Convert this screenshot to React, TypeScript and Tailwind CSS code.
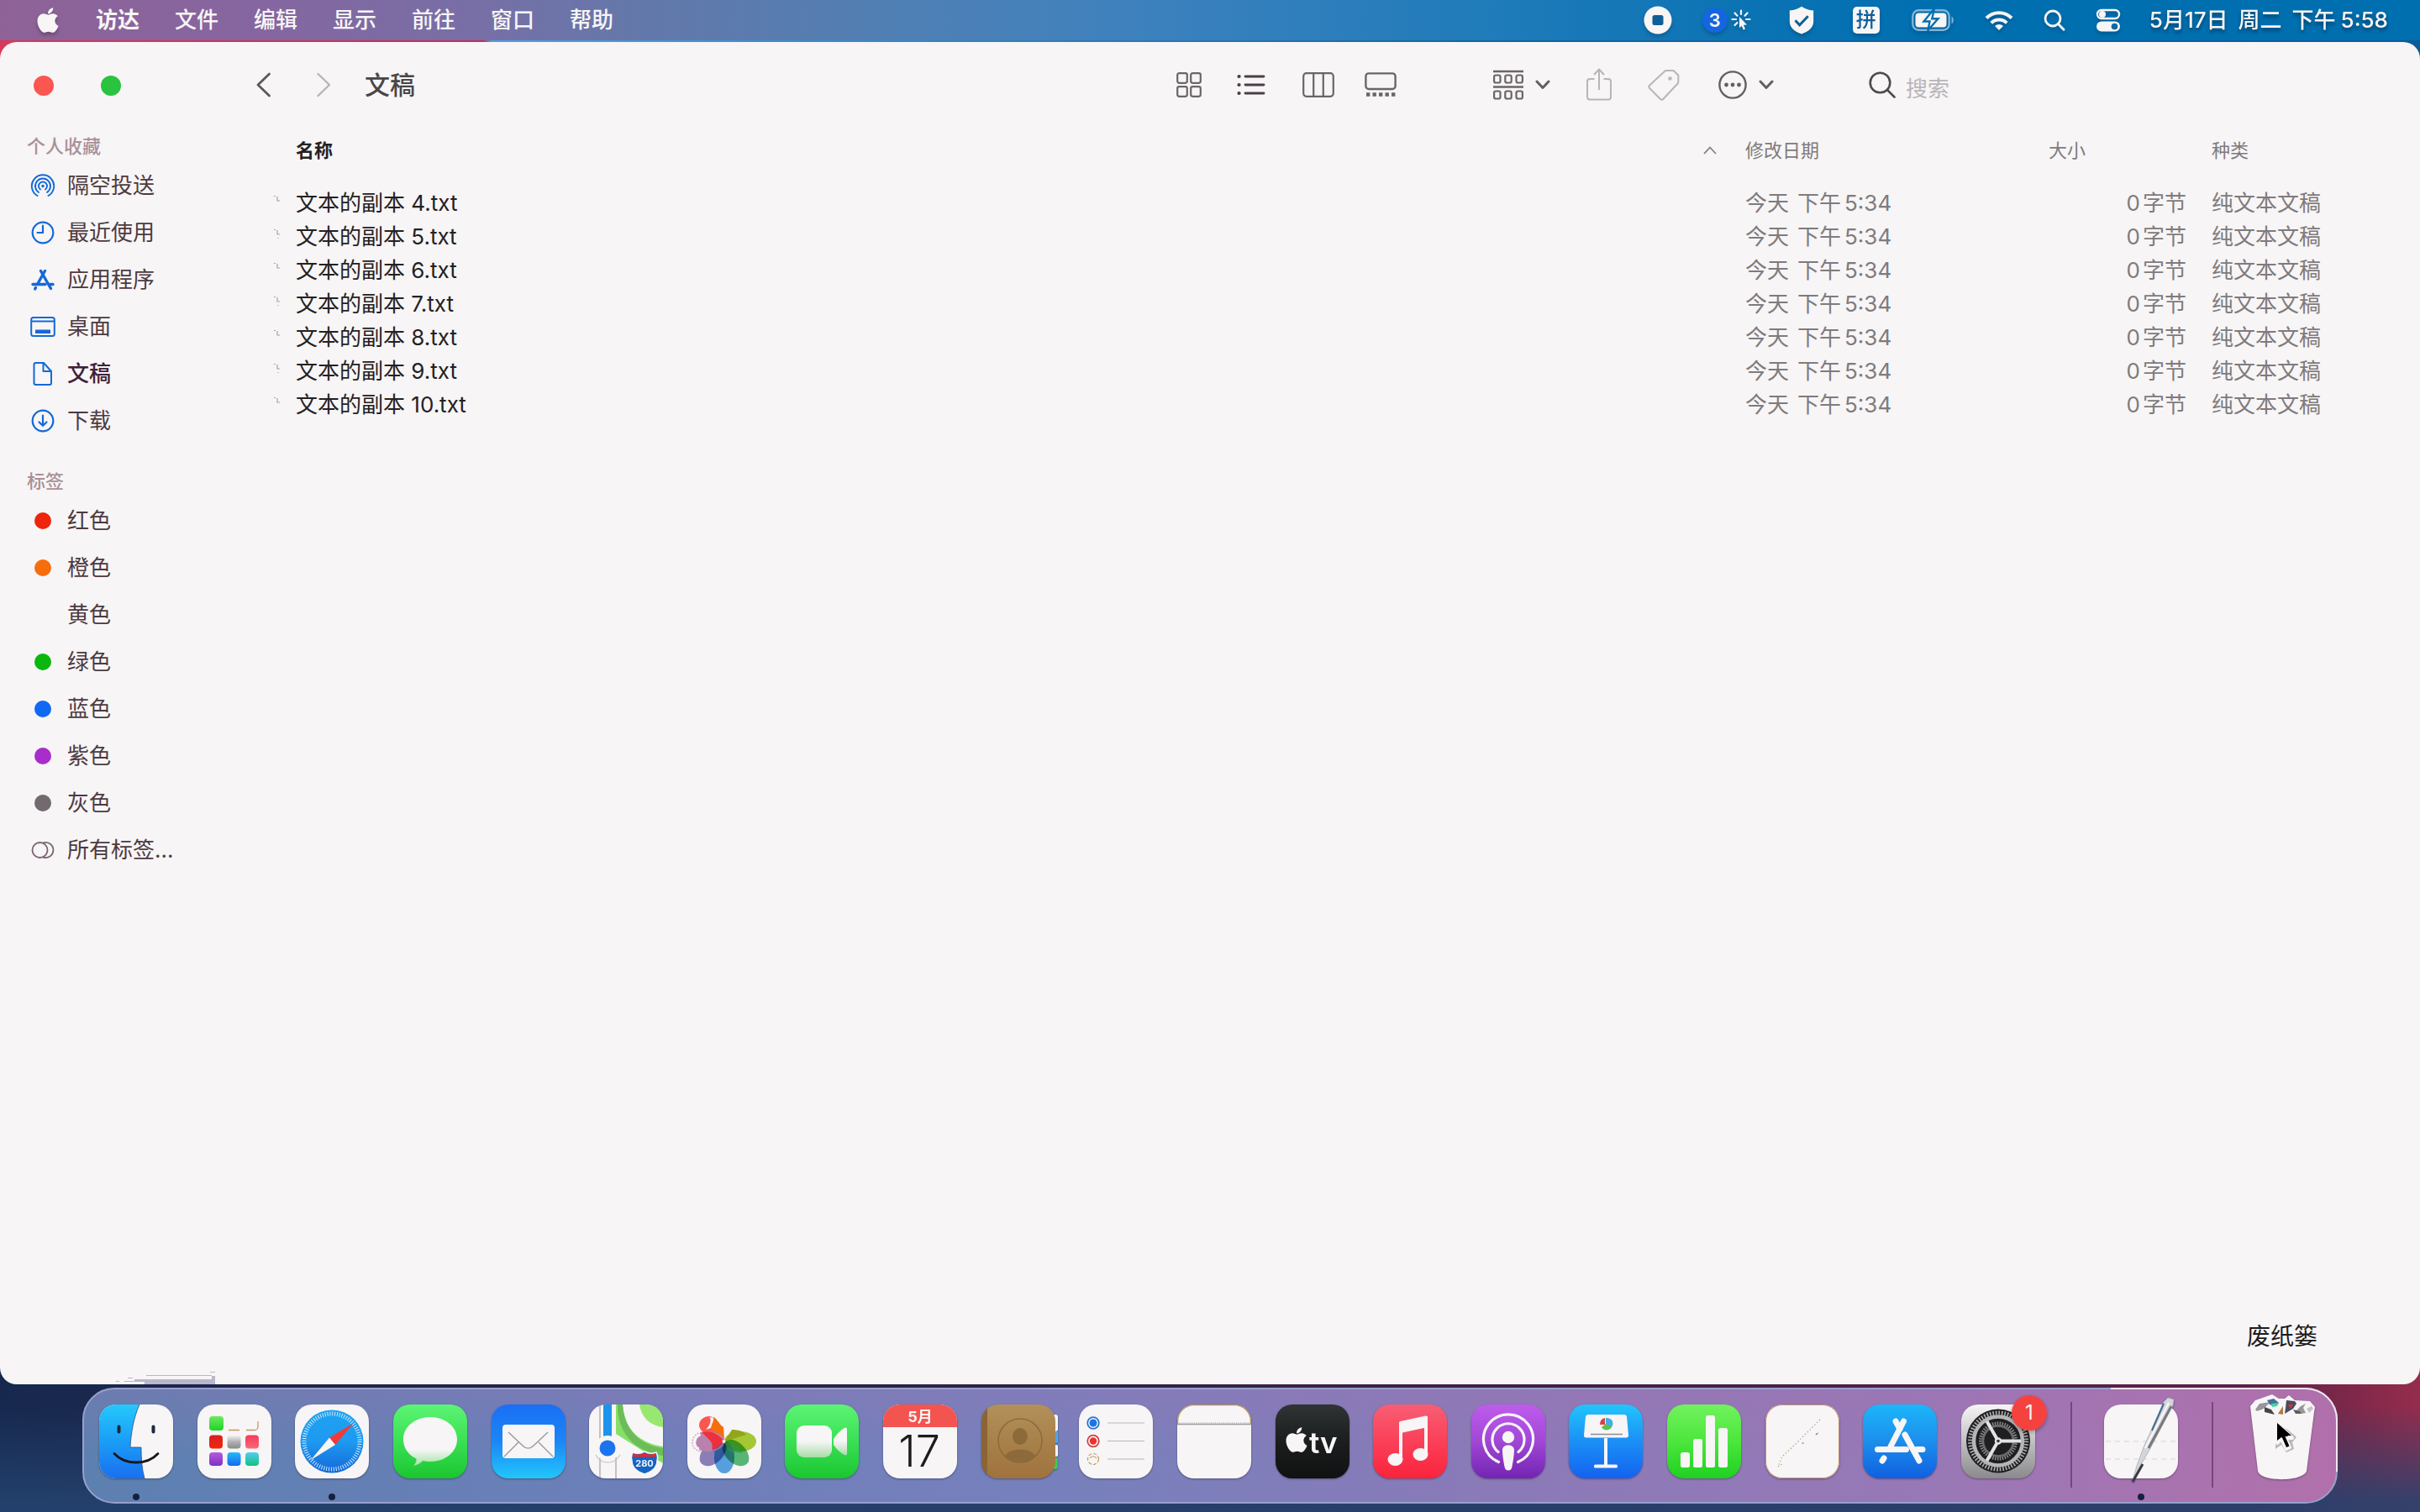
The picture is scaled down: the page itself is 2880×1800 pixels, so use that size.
import React from "react";
import { FaApple } from "react-icons/fa";

/* ---------- menu bar ---------- */

const menus = ["文件", "编辑", "显示", "前往", "窗口", "帮助"];

function MenuBar() {
  return (
    <header className="flex h-12 items-center bg-[linear-gradient(90deg,#8e6297_0px,#8566a0_320px,#786fa6_560px,#6478aa_760px,#4f80b5_1080px,#3b81be_1380px,#1f7bb9_1780px,#0a73b4_2100px,#006fb0_2300px)] pr-[38px] pl-[42px] text-[26px] leading-8 font-medium text-[#f7f5f6] [text-shadow:0_3px_4px_rgba(0,0,0,0.25)]">
      <button aria-label="Apple" className="flex w-[30px] justify-center drop-shadow-[0_3px_2px_rgba(0,0,0,0.25)]">
        <FaApple size={34} />
      </button>
      <nav className="ml-[42px] flex flex-1 gap-[42px]">
        <button className="font-bold">访达</button>
        {menus.map((m) => (
          <button key={m}>{m}</button>
        ))}
      </nav>
      <div className="flex items-center drop-shadow-[0_3px_2px_rgba(0,0,0,0.2)]">
        <button aria-label="停止录制" className="mr-9">
          <svg width="34" height="34" viewBox="0 0 34 34">
            <circle cx="17" cy="17" r="16.500" fill="#f7f5f6" />
            <rect x="10.500" y="11" width="13" height="12" rx="2.500" fill="#0f5f96" />
          </svg>
        </button>
        <button className="mr-[45px] flex items-center gap-1">
          <span className="flex size-[30px] items-center justify-center rounded-full bg-[#1466e0] text-[22px] leading-none font-semibold">3</span>
          <svg width="24" height="26" viewBox="0 0 24 26" fill="none" stroke="#f7f5f6" strokeWidth="2.200" strokeLinecap="round">
            <path d="M12 1.500v4.500M4.500 4.500l3 3.200M19.500 4.500l-3 3.200M1.500 12h4.500M18 12h4.500M4.500 19l3-3" />
            <path d="M10 9l9 9.500-4 .2 2 4.800-2.300 1-2-4.800L10 22.300z" fill="#f7f5f6" stroke="none" />
          </svg>
        </button>
        <button aria-label="安全" className="mr-[46px]">
          <svg width="30" height="34" viewBox="0 0 30 34">
            <path d="M15 .8c4 2.700 8.500 4.200 14.200 4.700v13c0 7.500-6 12-14.200 15C6.800 30.500.8 26 .8 18.500v-13C6.500 5 11 3.500 15 .8z" fill="#f7f5f6" />
            <path d="M7.500 17.200l5.200 5.600 10-10.500" fill="none" stroke="#0f5f96" strokeWidth="3" />
          </svg>
        </button>
        <button className="mr-[38px] flex size-8 items-center justify-center rounded-[5px] bg-[#f7f5f6] text-[24px] leading-8 font-medium text-[#0d5f97] [text-shadow:none]">拼</button>
        <button aria-label="电池" className="mr-9">
          <svg width="51" height="26" viewBox="0 0 51 26">
            <rect x="1.300" y="1.300" width="43.400" height="23.400" rx="7" fill="none" stroke="#7db4dc" strokeWidth="2.400" />
            <path d="M47.500 8.500c3 1.200 3 7.800 0 9z" fill="#7db4dc" />
            <rect x="4.500" y="4.500" width="37" height="17" rx="4" fill="#f7f5f6" />
            <path d="M25.500 1L14.500 14.500h7L19.500 25l12-13.800h-7.200L26.500 1z" fill="#f7f5f6" stroke="#006fb0" strokeWidth="2.400" />
          </svg>
        </button>
        <button aria-label="无线局域网" className="mr-9">
          <svg width="34" height="26" viewBox="0 0 34 26" fill="none" stroke="#f7f5f6" strokeWidth="4">
            <path d="M2 10.500a21 21 0 0130 0" />
            <path d="M7.800 16.400a13 13 0 0118.400 0" />
            <path d="M17 25l-5-5a7 7 0 0110 0z" fill="#f7f5f6" stroke="none" />
          </svg>
        </button>
        <button aria-label="聚焦" className="mr-9">
          <svg width="26" height="26" viewBox="0 0 26 26" fill="none" stroke="#f7f5f6" strokeWidth="2.800" strokeLinecap="round">
            <circle cx="11" cy="11" r="9" />
            <path d="M17.500 17.500l6.500 6.700" />
          </svg>
        </button>
        <button aria-label="控制中心" className="mr-[34px]">
          <svg width="30" height="28" viewBox="0 0 30 28">
            <rect x="2" y="2" width="26" height="10" rx="5" fill="none" stroke="#f7f5f6" strokeWidth="2.400" />
            <circle cx="8" cy="7" r="4" fill="#f7f5f6" />
            <rect x="1" y="15.500" width="28" height="12" rx="6" fill="#f7f5f6" />
            <circle cx="22.500" cy="21.500" r="3.800" fill="#0b6aa6" />
          </svg>
        </button>
        <time className="flex gap-3">
          <span>5月17日</span>
          <span>周二</span>
          <span className="flex gap-[6px]">
            <span>下午</span>
            <span>5:58</span>
          </span>
        </time>
      </div>
    </header>
  );
}

/* ---------- sidebar ---------- */

const blue = "#1469d8";

const favourites: { label: string; icon: React.ReactNode; active?: boolean }[] = [
  {
    label: "隔空投送",
    icon: (
      <g fill="none" stroke={blue} strokeWidth="1.900" strokeLinecap="round">
        <circle cx="15" cy="15.500" r="1.800" fill={blue} stroke="none" />
        <path d="M12 19.500a5 5 0 116 0" />
        <path d="M10 23a9 9 0 1110 0" />
        <path d="M8.500 27a13.200 13.200 0 1113 0" />
      </g>
    ),
  },
  {
    label: "最近使用",
    icon: (
      <g fill="none" stroke={blue} strokeWidth="2.200" strokeLinecap="round">
        <circle cx="15" cy="15" r="12.300" />
        <path d="M15 6.500V15H8.500" />
      </g>
    ),
  },
  {
    label: "应用程序",
    icon: (
      <g fill="none" stroke={blue} strokeWidth="3.400" strokeLinecap="round">
        <path d="M12.500 4.500l12 21" />
        <path d="M17.500 4.500L9 19.500" />
        <path d="M3 20.500h15M23.500 20.500H27M6.500 24.500l-.8 1.400" />
      </g>
    ),
  },
  {
    label: "桌面",
    icon: (
      <g fill="none" stroke={blue} strokeWidth="2">
        <rect x="1.200" y="4" width="27.600" height="22" rx="2.500" />
        <path d="M1.200 8.500h27.600" />
        <rect x="6" y="18.500" width="18" height="4.500" fill={blue} stroke="none" />
      </g>
    ),
  },
  {
    label: "文稿",
    active: true,
    icon: (
      <g fill="none" stroke={blue} strokeWidth="2" strokeLinejoin="round">
        <path d="M6.500 2h9.500l9 10v14a2 2 0 01-2 2H6.500a2 2 0 01-2-2V4a2 2 0 012-2z" />
        <path d="M15.500 2.500V12H25" />
      </g>
    ),
  },
  {
    label: "下载",
    icon: (
      <g fill="none" stroke={blue} strokeWidth="2.200" strokeLinecap="round">
        <circle cx="15" cy="15" r="12.300" />
        <path d="M15 8.500v12M10.500 16.500l4.500 4.300 4.500-4.300" />
      </g>
    ),
  },
];

const tags = [
  { label: "红色", dot: "bg-[#f0230c]" },
  { label: "橙色", dot: "bg-[#f66d0c]" },
  { label: "黄色", dot: "bg-transparent" },
  { label: "绿色", dot: "bg-[#0bb70e]" },
  { label: "蓝色", dot: "bg-[#0f69f3]" },
  { label: "紫色", dot: "bg-[#a92dcb]" },
  { label: "灰色", dot: "bg-[#726a6f]" },
];

function SidebarItem({ label, active, children }: { label: string; active?: boolean; children: React.ReactNode }) {
  return (
    <li>
      <a href="#" className={active ? "flex h-14 items-center gap-[14px] font-medium text-[#3f1f3c]" : "flex h-14 items-center gap-[14px] text-[#4d3a40]"}>
        <span className="flex w-[30px] justify-center">{children}</span>
        {label}
      </a>
    </li>
  );
}

function Sidebar() {
  return (
    <aside className="w-[288px] shrink-0">
      <div className="flex h-[104px] items-center gap-14 pl-10">
        <button aria-label="关闭" className="size-6 rounded-full bg-[#fb5650]" />
        <button aria-label="全屏幕" className="size-6 rounded-full bg-[#2ac33f]" />
      </div>
      <nav className="pt-1 pl-8 text-[26px] leading-8">
        <h2 className="text-[22px] leading-8 font-medium text-[#a99098]">个人收藏</h2>
        <ul className="pt-[3px] pl-1">
          {favourites.map((f) => (
            <SidebarItem key={f.label} label={f.label} active={f.active}>
              <svg width="30" height="30" viewBox="0 0 30 30">{f.icon}</svg>
            </SidebarItem>
          ))}
        </ul>
        <h2 className="pt-7 text-[22px] leading-8 font-medium text-[#a99098]">标签</h2>
        <ul className="pt-[3px] pl-1">
          {tags.map((t) => (
            <SidebarItem key={t.label} label={t.label}>
              <span className={`size-5 rounded-full ${t.dot}`} />
            </SidebarItem>
          ))}
          <SidebarItem label="所有标签...">
            <svg width="28" height="20" viewBox="0 0 28 20" fill="none" stroke="#7b6672" strokeWidth="1.800">
              <circle cx="10.500" cy="10" r="9" />
              <path d="M14 1.700A9 9 0 1114 18.300" />
            </svg>
          </SidebarItem>
        </ul>
      </nav>
    </aside>
  );
}

/* ---------- toolbar ---------- */

function Chevron() {
  return (
    <svg width="18" height="12" viewBox="0 0 18 12" fill="none" stroke="#655e62" strokeWidth="3" strokeLinecap="round" strokeLinejoin="round">
      <path d="M2 2l7 7.500L16 2" />
    </svg>
  );
}

function Toolbar() {
  return (
    <div className="flex h-[102px] items-center pl-4">
      <button aria-label="返回">
        <svg width="20" height="30" viewBox="0 0 20 30" fill="none" stroke="#5c585a" strokeWidth="2.800" strokeLinecap="round" strokeLinejoin="round">
          <path d="M16.500 2L3 15l13.500 13" />
        </svg>
      </button>
      <button aria-label="前进" className="ml-[51px]">
        <svg width="20" height="30" viewBox="0 0 20 30" fill="none" stroke="#b7b4b6" strokeWidth="2.400" strokeLinecap="round" strokeLinejoin="round">
          <path d="M3.500 2L17 15 3.500 28" />
        </svg>
      </button>
      <h1 className="ml-[39px] flex-1 text-[30px] leading-10 font-medium text-[#4a4648]">文稿</h1>

      <div className="flex items-center">
        <button aria-label="图标视图">
          <svg width="30" height="30" viewBox="0 0 30 30" fill="none" stroke="#6b6569" strokeWidth="2.200">
            <rect x="1.200" y="1.200" width="11.600" height="11.600" rx="2.200" />
            <rect x="17.200" y="1.200" width="11.600" height="11.600" rx="2.200" />
            <rect x="1.200" y="17.200" width="11.600" height="11.600" rx="2.200" />
            <rect x="17.200" y="17.200" width="11.600" height="11.600" rx="2.200" />
          </svg>
        </button>
        <button aria-label="列表视图" className="ml-[42px]">
          <svg width="34" height="26" viewBox="0 0 34 26" stroke="#4b3f45" strokeWidth="2.800" strokeLinecap="round">
            <path d="M10 3h22M10 13h22M10 23h22" />
            <path d="M2.500 3h.1M2.500 13h.1M2.500 23h.1" strokeWidth="4.200" />
          </svg>
        </button>
        <button aria-label="分栏视图" className="ml-11">
          <svg width="38" height="30" viewBox="0 0 38 30" fill="none" stroke="#6b6569" strokeWidth="2.200">
            <rect x="1.200" y="1.200" width="35.600" height="27.600" rx="3.500" />
            <path d="M13.200 1v28M24.800 1v28" />
          </svg>
        </button>
        <button aria-label="画廊视图" className="ml-9">
          <svg width="38" height="30" viewBox="0 0 38 30" fill="none" stroke="#6b6569" strokeWidth="2.400">
            <rect x="1.400" y="1.400" width="35.200" height="18.600" rx="3.500" />
            <path d="M2 26.500h34.500" strokeWidth="4.600" strokeDasharray="4.400 3.100" />
          </svg>
        </button>
        <button aria-label="分组" className="ml-[115px] flex items-center gap-[14px]">
          <svg width="36" height="36" viewBox="0 0 36 36" fill="none" stroke="#6b6569" strokeWidth="2.200">
            <path d="M0 2h36M0 20.500h36" strokeWidth="2.600" />
            <rect x="1.100" y="6.500" width="7.400" height="9" rx="2" />
            <rect x="14.300" y="6.500" width="7.400" height="9" rx="2" />
            <rect x="27.500" y="6.500" width="7.400" height="9" rx="2" />
            <rect x="1.100" y="25.500" width="7.400" height="9" rx="2" />
            <rect x="14.300" y="25.500" width="7.400" height="9" rx="2" />
            <rect x="27.500" y="25.500" width="7.400" height="9" rx="2" />
          </svg>
          <Chevron />
        </button>
        <button aria-label="共享" className="ml-[43px]">
          <svg width="30" height="40" viewBox="0 0 30 40" fill="none" stroke="#b8b5b7" strokeWidth="2" strokeLinejoin="round">
            <path d="M9.500 13H4a3 3 0 00-3 3v18.500a3 3 0 003 3h22a3 3 0 003-3V16a3 3 0 00-3-3h-5.500" />
            <path d="M15 26V1.500M9 8l6-6.500L21 8" />
          </svg>
        </button>
        <button aria-label="标签" className="ml-[43px]">
          <svg width="38" height="38" viewBox="0 0 38 38" fill="none" stroke="#b8b5b7" strokeWidth="2" strokeLinejoin="round">
            <path d="M20.500 2.500L2.200 19.500a2.500 2.500 0 000 3.500L15 36a2.200 2.200 0 003.300 0L35.500 17.500a3 3 0 00.8-2V7.500L30.500 2h-8.500z" />
            <circle cx="26.500" cy="11.500" r="1.300" />
          </svg>
        </button>
        <button aria-label="更多" className="ml-[46px] flex items-center gap-[14px]">
          <svg width="34" height="34" viewBox="0 0 34 34" fill="none" stroke="#655e62" strokeWidth="2.400">
            <circle cx="17" cy="17" r="15.600" />
            <g fill="#655e62" stroke="none">
              <circle cx="9.500" cy="17" r="2.400" />
              <circle cx="17" cy="17" r="2.400" />
              <circle cx="24.500" cy="17" r="2.400" />
            </g>
          </svg>
          <Chevron />
        </button>
      </div>

      <label className="ml-[113px] flex w-[656px] items-center gap-3">
        <svg width="32" height="32" viewBox="0 0 32 32" fill="none" stroke="#4f4a4d" strokeWidth="2.600" strokeLinecap="round">
          <circle cx="13.500" cy="13.500" r="11.800" />
          <path d="M22 22l8.500 8.500" />
        </svg>
        <input aria-label="搜索" placeholder="搜索" className="h-10 min-w-0 flex-1 bg-transparent pt-2 text-[26px] leading-8 outline-none placeholder:text-[#b9b6b8]" />
      </label>
    </div>
  );
}

/* ---------- file list ---------- */

const files = [4, 5, 6, 7, 8, 9, 10].map((n) => `文本的副本 ${n}.txt`);

function FileTable() {
  return (
    <table className="w-full table-fixed text-left text-[26px] leading-10 text-[#7f7b7d]">
      <colgroup>
        <col className="w-16" />
        <col />
        <col className="w-[361px]" />
        <col className="w-[194px]" />
        <col className="w-[248px]" />
      </colgroup>
      <thead className="text-[22px]">
        <tr>
          <td />
          <th className="h-[54px] p-0 pr-[34px] font-semibold text-[#242122]">
            <button className="flex w-full items-center justify-between">
              名称
              <svg width="16" height="10" viewBox="0 0 16 10" fill="none" stroke="#858083" strokeWidth="1.800">
                <path d="M1 9l7-7.500L15 9" />
              </svg>
            </button>
          </th>
          <th className="p-0 font-normal">修改日期</th>
          <th className="p-0 font-normal">大小</th>
          <th className="p-0 font-normal">种类</th>
        </tr>
      </thead>
      <tbody className="before:block before:h-4 before:content-['']">
        {files.map((f, i) => (
          <tr key={f}>
            <td className="h-10 p-0 pl-[38px]">
              <svg width="8" height="20" viewBox="0 0 8 20" fill="none" stroke="#a5a2a4" strokeWidth="1.200">
                <path d={i % 2 ? "M0 1.500h2M4 2v5h3M5 11v1" : "M0 1.500h2M4 2v5h3"} />
              </svg>
            </td>
            <td className="p-0 text-[#242122]">{f}</td>
            <td className="p-0">
              <span className="flex gap-[10px]">
                <span>今天</span>
                <span className="flex gap-1">
                  <span>下午</span>
                  <span>5:34</span>
                </span>
              </span>
            </td>
            <td className="p-0 pr-[30px]">
              <span className="flex justify-end gap-[3px]">
                <span>0</span>
                <span>字节</span>
              </span>
            </td>
            <td className="p-0">纯文本文稿</td>
          </tr>
        ))}
      </tbody>
    </table>
  );
}

/* ---------- dock ---------- */

const W = "#f7f5f6";

function Tile({ fill = W }: { fill?: string }) {
  return <rect width="88" height="88" rx="20" fill={fill} />;
}

function Grad({ id, stops }: { id: string; stops: string[] }) {
  return (
    <linearGradient id={id} x1="0" y1="0" x2="0" y2="1">
      {stops.map((c, i) => (
        <stop key={i} offset={i / (stops.length - 1)} stopColor={c} />
      ))}
    </linearGradient>
  );
}

const petals = [
  { a: 90, c: "#a9cf38" },
  { a: 135, c: "#5cbd78" },
  { a: 180, c: "#5aa6e4" },
  { a: 225, c: "#8d84bd" },
];

const apps: { name: string; art: React.ReactNode; running?: boolean; badge?: string }[] = [
  {
    name: "访达",
    running: true,
    art: (
      <>
        <defs>
          <Grad id="finder" stops={["#25c8fc", "#1b9df6", "#1a6ff0"]} />
          <clipPath id="tile"><rect width="88" height="88" rx="20" /></clipPath>
        </defs>
        <Tile />
        <path clipPath="url(#tile)" d="M0 0h48C41 16 38 33 37 51h13c0 14 1 26 4 37H0z" fill="url(#finder)" />
        <path d="M48 0C41 16 38 33 37 51h13c0 14 1 26 4 37" fill="none" stroke="#1d4f8a" strokeWidth=".8" />
        <path d="M23.500 26.500v6M64.500 26.500v6" stroke="#1c2a3c" strokeWidth="4" strokeLinecap="round" />
        <path d="M18 58.500c13 14 39 14 52 0" fill="none" stroke="#15171c" strokeWidth="2.800" strokeLinecap="round" />
      </>
    ),
  },
  {
    name: "启动台",
    art: (
      <>
        <defs>
          <Grad id="lp1" stops={["#6fe85e", "#1fd32a"]} />
          <Grad id="lp2" stops={["#d92020", "#f0260e"]} />
          <Grad id="lp3" stops={["#f7f5f6", "#b0b0b2", "#8a8a8c"]} />
          <Grad id="lp4" stops={["#f53a5a", "#f86a78"]} />
          <Grad id="lp5" stops={["#b45ae0", "#8130c0"]} />
          <Grad id="lp6" stops={["#24baf8", "#1468f0"]} />
          <Grad id="lp7" stops={["#55cdf2", "#0fc27a"]} />
        </defs>
        <Tile />
        <rect x="14" y="14" width="17" height="17" rx="4" fill="url(#lp1)" />
        <path d="M37 30.500h13M58 30.500h10a4 4 0 004-4V20" fill="none" stroke="#c69a5c" strokeWidth="1.300" />
        <rect x="14" y="36.500" width="16" height="16" rx="4" fill="url(#lp2)" />
        <rect x="35.500" y="36.500" width="16" height="16" rx="4" fill="url(#lp3)" />
        <rect x="57" y="36.500" width="16" height="16" rx="4" fill="url(#lp4)" />
        <rect x="14" y="57" width="16" height="16" rx="4" fill="url(#lp5)" />
        <rect x="35.500" y="57" width="16" height="16" rx="4" fill="url(#lp6)" />
        <rect x="57" y="57" width="16" height="16" rx="4" fill="url(#lp7)" />
      </>
    ),
  },
  {
    name: "Safari浏览器",
    running: true,
    art: (
      <>
        <defs><Grad id="safari" stops={["#1fa2f0", "#1e9af0", "#1468dc"]} /></defs>
        <Tile />
        <circle cx="44" cy="44" r="37.500" fill="url(#safari)" />
        <circle cx="44" cy="44" r="33" fill="none" stroke="#d4ebfa" strokeWidth="5" strokeDasharray="1 1.880" />
        <path d="M70 22L41 39.500l7 8.500z" fill="#f03a38" />
        <path d="M19 66l22-26.500 7 8.500z" fill={W} />
      </>
    ),
  },
  {
    name: "信息",
    art: (
      <>
        <defs>
          <Grad id="msg" stops={["#5cf474", "#3ae054", "#1ac630"]} />
          <Grad id="bub" stops={[W, W, W, "#9fe4a0"]} />
        </defs>
        <Tile fill="url(#msg)" />
        <path d="M44 15c18 0 32 11.500 32 26.500S62 68 44 68c-3 0-6-.3-9-1-2.500 3-6 5-11 6 2.500-2.500 3.500-5 3.500-8.500C18 60 12 52 12 41.500 12 26.500 26 15 44 15z" fill="url(#bub)" />
      </>
    ),
  },
  {
    name: "邮件",
    art: (
      <>
        <defs><Grad id="mail" stops={["#1b6ff4", "#1b86f6", "#22c6fb"]} /></defs>
        <Tile fill="url(#mail)" />
        <rect x="13" y="24" width="62" height="40" rx="4" fill={W} />
        <g fill="none" stroke="#9a989c" strokeWidth="1.400">
          <path d="M20 33l17 16c4 4 9 4 13 0l17-16" />
          <path d="M15 62l17-17M73 62L56 45" />
        </g>
      </>
    ),
  },
  {
    name: "地图",
    art: (
      <>
        <Tile />
        <g clipPath="url(#tile)">
          <path d="M32 0h8c2 30 20 46 48 50v20L32 35z" fill="#86e066" />
          <path d="M40 0c2 30 20 48 48 52v9C58 56 38 40 34 8V0z" fill="#6cbd5a" />
          <path d="M60 0h28v27C72 25 62 15 60 0z" fill="#98e870" />
          <path d="M13 0v88M32 60v28" stroke="#a39f9c" strokeWidth="1.200" />
          <rect x="17" y="0" width="10" height="38" fill="#1c93ec" />
          <circle cx="22" cy="52" r="15" fill={W} />
          <path d="M8 60c6 12 22 12 29 0" fill="none" stroke="#c9c4c0" strokeWidth="1.200" />
          <circle cx="22" cy="52" r="9.500" fill="#1b74ee" />
        </g>
        <path d="M52 57c5 2 9 2 14-1 5 3 9 3 14 1 2 4 2 7 1 10 0 9-7 13-15 16-8-3-15-7-15-16-1-3-1-6 1-10z" fill="#1565c4" stroke={W} strokeWidth="1.600" />
        <path d="M53 58.500c4 1.500 9 1.500 13-1 4 2.500 9 2.500 13 1l1 4H52z" fill="#e02a30" />
        <text x="66" y="74" textAnchor="middle" fill={W} className="text-[11px] font-bold">280</text>
      </>
    ),
  },
  {
    name: "照片",
    art: (
      <>
        <Tile />
        <path d="M44 43C32 41 15 35 14 25c0-7 6-11 12-11 8 0 14 14 18 29z" fill="#fb5650" />
        <path d="M44 42c-4-7-13-8-16-14 0-6 3-9 3-13 5 2 7 9 12 12z" fill="#f66d0c" />
        <path d="M26 15c3 2 2 9-4 15l6-2c1-5 4-9 3-12z" fill={W} />
        {petals.map((p) => (
          <ellipse key={p.a} cx="44" cy="25" rx="12" ry="19" fill={p.c} className="mix-blend-multiply" transform={`rotate(${p.a} 44 44)`} />
        ))}
        <path d="M44 44L53 30c8 0 14 2 17 6z" fill="#94a51c" />
        <ellipse cx="44" cy="25" rx="12" ry="19" fill="#b982ae" transform="rotate(270 44 44)" />
        <path d="M15 34c-9 3-12 16-2 21" fill="none" stroke={W} strokeWidth="7" />
        <path d="M17 33c-13 2-16 20-1 23" fill="none" stroke="#c79ab8" strokeWidth="1.200" strokeDasharray="2 1.500" />
        <path d="M17 33c10-3 21 2 27 11-7 10-12 10-15 9 3-8-4-12-12-20z" fill="#ee2f3c" />
        <path d="M44 44L29 54l8 12 7-20 9 18 4-12z" fill="#3d6a94" fillOpacity="0.35" />
        <path d="M44 44l16 6 6 8-16-2z" fill="#2f9a4c" fillOpacity="0.6" />
        <circle cx="43.500" cy="44" r="2" fill={W} />
      </>
    ),
  },
  {
    name: "FaceTime通话",
    art: (
      <>
        <defs><Grad id="cam" stops={[W, W, "#a8dca8"]} /></defs>
        <Tile fill="url(#msg)" />
        <rect x="14" y="25" width="42" height="38" rx="9" fill="url(#cam)" />
        <path d="M58 41c4-6 9-11 13-13 2-1 3 0 3 2v28c0 2-1 3-3 2-4-2-9-6-13-12z" fill="url(#cam)" />
      </>
    ),
  },
  {
    name: "日历",
    art: (
      <>
        <Tile />
        <path clipPath="url(#tile)" d="M0 0h88v27H0z" fill="#f4544f" />
        <text x="44" y="21" textAnchor="middle" fill={W} className="text-[18px] font-bold">5月</text>
        <text x="43" y="74" textAnchor="middle" fill="#1d1b1c" className="text-[52px] font-light">17</text>
      </>
    ),
  },
  {
    name: "通讯录",
    art: (
      <>
        <defs><Grad id="book" stops={["#b3905a", "#a8814a", "#a0723e"]} /></defs>
        <rect x="80" y="12" width="11" height="20" rx="3" fill={W} />
        <rect x="80" y="32" width="11" height="14" rx="2" fill="#4aa8e8" />
        <rect x="80" y="48" width="11" height="14" rx="2" fill={W} />
        <rect x="80" y="63" width="11" height="14" rx="3" fill="#3cc850" />
        <Tile fill="url(#book)" />
        <path clipPath="url(#tile)" d="M0 0h7v88H0z" fill="#8a6436" />
        <circle cx="46" cy="43" r="26" fill="none" stroke="#8d6a3a" strokeWidth="1.500" />
        <ellipse cx="46" cy="38" rx="9" ry="10" fill="#8d6a3a" />
        <path d="M28 61c6-10 30-10 36 0-9 11-27 11-36 0z" fill="#8d6a3a" />
      </>
    ),
  },
  {
    name: "提醒事项",
    art: (
      <>
        <Tile />
        <g fill="none" strokeWidth="1.800">
          <circle cx="17" cy="22" r="6.800" stroke="#2a78cc" />
          <circle cx="17" cy="43.500" r="6.800" stroke="#d04044" />
          <circle cx="17" cy="65" r="6.500" stroke="#c69a5c" strokeWidth="1.200" strokeDasharray="4 2" />
          <path d="M13 64c2-3 6-3 8 0" stroke="#c69a5c" strokeWidth="1.200" />
        </g>
        <circle cx="17" cy="22" r="4.500" fill="#1b74ee" />
        <circle cx="17" cy="43.500" r="4.200" fill="#f0302c" />
        <path d="M34 22h44M34 43.500h44M34 65h44" stroke="#b9b7b9" strokeWidth="1.200" />
      </>
    ),
  },
  {
    name: "备忘录",
    art: (
      <>
        <Tile />
        <path d="M.6 23V20A19.400 19.400 0 0120 .6h48A19.400 19.400 0 0187.400 20v3" fill="none" stroke="#b5935a" strokeWidth="1.200" />
        <path d="M0 23.500h88" stroke="#a09c9c" strokeWidth="1.400" />
        <path d="M0 22h88" stroke="#a09c9c" strokeWidth="1" strokeDasharray="1 1.500" />
      </>
    ),
  },
  {
    name: "视频",
    art: (
      <>
        <defs><Grad id="tv" stops={["#2f3435", "#1b1d1e", "#101212"]} /></defs>
        <Tile fill="url(#tv)" />
        <FaApple x="8" y="25" size={34} color={W} />
        <text x="40" y="58" fill={W} className="text-[35px] font-semibold">tv</text>
      </>
    ),
  },
  {
    name: "音乐",
    art: (
      <>
        <defs><Grad id="music" stops={["#f85e74", "#fa4058", "#fb233c"]} /></defs>
        <Tile fill="url(#music)" />
        <path d="M33 65V22L63 15.500V59" fill="none" stroke={W} strokeWidth="4" strokeLinejoin="round" />
        <path d="M31 21l34-7v13l-32 7z" fill={W} />
        <ellipse cx="26.500" cy="65.500" rx="9" ry="7.500" fill={W} />
        <ellipse cx="56.500" cy="59.500" rx="9" ry="7.500" fill={W} />
      </>
    ),
  },
  {
    name: "播客",
    art: (
      <>
        <defs><Grad id="pod" stops={["#bf5cec", "#a047d6", "#7424b2"]} /></defs>
        <Tile fill="url(#pod)" />
        <g fill="none" stroke={W} strokeWidth="3.200" strokeLinecap="round">
          <path d="M32.500 68.500a29.500 29.500 0 1123 0" />
          <path d="M32 56.500a19 19 0 1124 0" />
        </g>
        <circle cx="44" cy="39" r="7.200" fill={W} />
        <path d="M37 54c0-3.500 3-5.500 7-5.500s7 2 7 5.500c0 6-1.500 15-2.500 20-.6 3-2 4.500-4.500 4.500s-3.900-1.500-4.500-4.500C38.500 69 37 60 37 54z" fill={W} />
      </>
    ),
  },
  {
    name: "Keynote讲演",
    art: (
      <>
        <defs><Grad id="key" stops={["#22c5fb", "#1b8ff6", "#1462f0"]} /></defs>
        <Tile fill="url(#key)" />
        <path d="M23 12h43a3 3 0 013 2.500l2 22a2.500 2.500 0 01-2.500 3h-48a2.500 2.500 0 01-2.500-3l2-22A3 3 0 0123 12z" fill={W} />
        <path d="M26 35.500h38" stroke="#8c8c9c" strokeWidth="1.600" />
        <path d="M43 24v-8a8 8 0 00-6 8z" fill="#d8404c" />
        <path d="M44 16c11 0 10 11 4 13l-4-6z" fill="#3fb0e0" />
        <path d="M44 23l7 4c-3 5-10 4-12 0z" fill="#5fc04a" />
        <path d="M44 40v32" stroke={W} strokeWidth="4" />
        <rect x="30" y="71.500" width="28" height="4" rx="1.500" fill={W} />
      </>
    ),
  },
  {
    name: "Numbers表格",
    art: (
      <>
        <defs><Grad id="num" stops={["#72f25e", "#4ce63c", "#1fd022"]} /></defs>
        <Tile fill="url(#num)" />
        <g fill={W}>
          <rect x="16" y="57" width="11" height="18" rx="2.500" />
          <rect x="31" y="41" width="11" height="34" rx="2.500" />
          <rect x="46" y="13" width="11" height="62" rx="2.500" />
          <rect x="61" y="28" width="11" height="47" rx="2.500" />
        </g>
      </>
    ),
  },
  {
    name: "Pages文稿",
    art: (
      <>
        <Tile />
        <rect x=".5" y=".5" width="87" height="87" rx="19.500" fill="none" stroke="#c08a60" strokeWidth=".9" />
        <path d="M65 18L36 47 20 62l-5 12 5-3" fill="none" stroke="#bfa27c" strokeWidth="1.200" strokeDasharray="1.500 2.500" />
        <path d="M60 36l2.500-2M43.500 46h2" stroke="#8f8684" strokeWidth="1.600" />
      </>
    ),
  },
  {
    name: "App Store",
    art: (
      <>
        <defs><Grad id="store" stops={["#1cb6fa", "#1c8eec", "#1060e0"]} /></defs>
        <Tile fill="url(#store)" />
        <g fill="none" stroke={W} strokeWidth="7" strokeLinecap="round">
          <path d="M48.500 20L33 50" />
          <path d="M39 20l5 9M50 36l17 31" />
          <path d="M17.500 53.500h34M64 53.500h7M25 64l-2 3" />
        </g>
      </>
    ),
  },
  {
    name: "系统偏好设置",
    badge: "1",
    art: (
      <>
        <defs><Grad id="pref" stops={[W, "#c2c0c2", "#8a8a8c"]} /></defs>
        <Tile fill="url(#pref)" />
        <circle cx="44" cy="43.500" r="38" fill="#1f1f21" />
        <g fill="none">
          <circle cx="44" cy="43.500" r="33.500" stroke="#a9a9ab" strokeWidth="5" strokeDasharray="1.700 1.810" />
          <circle cx="44" cy="43.500" r="29" stroke="#b6b6b8" strokeWidth="4.500" />
          <circle cx="44" cy="43.500" r="20" stroke="#8c8c8e" strokeWidth="6" strokeDasharray="1.400 1.400" />
          <circle cx="44" cy="43.500" r="18" stroke="#6c6c6e" strokeWidth="2.500" />
          <path d="M44 43.500h27M44 43.500L30.500 20M44 43.500L30.500 67" stroke="#e4e2e4" strokeWidth="4" />
        </g>
        <circle cx="44" cy="43.500" r="4.200" fill="#e4e2e4" />
        <circle cx="44" cy="43.500" r="1.800" fill="#333" />
      </>
    ),
  },
];

function DockItem({ name, running, badge, children }: { name: string; running?: boolean; badge?: string; children: React.ReactNode }) {
  return (
    <button aria-label={name} className="relative size-[88px]">
      <svg width="88" height="88" viewBox="0 0 88 88" className="overflow-visible drop-shadow-[0_1px_1px_rgba(0,0,0,0.35)]">
        {children}
      </svg>
      {badge && (
        <span className="absolute -top-[11px] -right-[14px] flex size-[42px] items-center justify-center rounded-full bg-[#f6423f] text-[24px] leading-none text-[#f7f5f6] shadow-[0_2px_4px_rgba(0,0,0,0.3)]">
          {badge}
        </span>
      )}
      {running && <span className="absolute -bottom-[26px] left-10 size-2 rounded-full bg-[#15203f]" />}
    </button>
  );
}

function Dock() {
  return (
    <footer className="px-[98px] pt-1 pb-[10px]">
      <div className="relative flex h-[138px] items-center rounded-[38px] border-2 border-[#97a0cd] bg-[linear-gradient(180deg,rgba(170,110,175,0.22),rgba(255,255,255,0)_60%),linear-gradient(90deg,#5c80b0,#6d7fba_25%,#7880bc_45%,#8a7ab8_62%,#9878b6_82%,#b270ab)] pr-5 pb-[10px] pl-[18px]">
        <span className="absolute -top-[2px] -right-[2px] h-[100px] w-[270px] rounded-tr-[38px] border-t-2 border-r-2 border-[#f1e4ee]" />
        <div className="flex flex-1 justify-between">
          {apps.map((a) => (
            <DockItem key={a.name} name={a.name} running={a.running} badge={a.badge}>
              {a.art}
            </DockItem>
          ))}
        </div>
        <div className="mt-2 mr-[38px] ml-[42px] h-[102px] w-[2px] bg-[#6b4a80]" />
        <DockItem name="文本编辑" running>
          <Tile />
          <path d="M2 44h84M2 65h84" stroke="#d5d3d6" strokeWidth="1" strokeDasharray="6 5" />
          <path d="M71-3l5-5 7 2-1 7-28 53-11 19-9 17 5-17 8-22z" fill="#d3d6da" stroke="#a9acb2" strokeWidth=".8" />
          <path d="M71-1L57 31" stroke="#3f6d94" strokeWidth="2" />
          <path d="M80 2L53 52" stroke="#77797f" strokeWidth="3" />
          <path d="M77-2L49 52" stroke={W} strokeWidth="2.500" />
          <path d="M46 71L34 92" stroke="#3b3b3f" strokeWidth="3" />
        </DockItem>
        <div className="mt-2 mr-[38px] ml-10 h-[102px] w-[2px] bg-[#7a4678]" />
        <div className="relative">
          <DockItem name="废纸篓">
            <path d="M6 5l6-7 20-7 8 5h7l5-4 7 6 18 1 6 7-1 6-9 70c-3 13-55 14-58 0L7 14z" fill={W} />
            <path d="M12 9l5-7 13-2-8 8-8 3zM60 11l6-6 6-3-3 5 3 6-5 1z" fill="#98969a" />
            <path d="M73 8l6-3 2 3-5 5z" fill="#c6c4c8" />
            <path d="M23 6l8 3 4 6-12-3z" fill="#47454a" />
            <path d="M26-2l8-2 6 5-6 4-5-2z" fill="#4a6f9c" />
            <path d="M31 2l9-1-2 4-6 1z" fill="#3fd6a0" />
            <path d="M49-2l10 1 2 3-4 6-10 6 1-7z" fill="#4b4a64" />
            <path d="M51 3l6 0-3 5z" fill="#e03030" />
            <path d="M57 9l8 2 2 3h-7z" fill="#5d5a60" />
            <path d="M39 14l6-9v10z" fill="#b07a40" />
            <path d="M36 24v32l7-5 6 9 9-4-2-8 5-6-9-8" fill="#bab8bc" />
            <path d="M38 25v24l5-5 6 12 4-2-5-11h8z" fill="#000" stroke={W} strokeWidth="4" strokeLinejoin="round" />
            <path d="M38 25v21l5.500-4.500 5.500 12.500 3.500-1.500-5.500-12.500h8z" fill="#000" />
          </DockItem>
          <span className="absolute bottom-full left-1/2 mb-[58px] -translate-x-1/2 text-[28px] leading-10 whitespace-nowrap text-[#1d1b1c]">废纸篓</span>
        </div>
      </div>
    </footer>
  );
}

export default function App() {
  return (
    <div className="flex min-h-screen flex-col bg-[linear-gradient(90deg,#d63a5c_0px,#c03058_575px,#4f9fe4_585px,#3c88c8_1000px,#14639f_1800px,#0a5c9c_100%),linear-gradient(180deg,rgba(36,66,110,0)_20%,rgba(36,68,112,0.85)_92%),linear-gradient(90deg,#17284e,#2a2348_35%,#46204a_70%,#5c2246_93%,#962c4c)] bg-[size:100%_100px,100%_160px,100%_100%] bg-[position:top,bottom,top] bg-no-repeat font-['Inter','Noto_Sans_CJK_SC',sans-serif]">
      <MenuBar />
      <main className="relative mt-[2px] flex flex-1 rounded-[20px] bg-[#f7f5f6]">
        <Sidebar />
        <section className="min-w-0 flex-1">
          <Toolbar />
          <FileTable />
        </section>
        <svg className="absolute bottom-0 left-[138px]" width="120" height="16" viewBox="0 0 120 16" fill="#b9b7cc">
          <path d="M22 10h92V6h4v10H34v-3H10v-1h12zM36 5h78v1H36zM0 12h4v1H0zM112 1h6v1h-6zM14 8h6v1h-6z" />
        </svg>
      </main>
      <Dock />
    </div>
  );
}
